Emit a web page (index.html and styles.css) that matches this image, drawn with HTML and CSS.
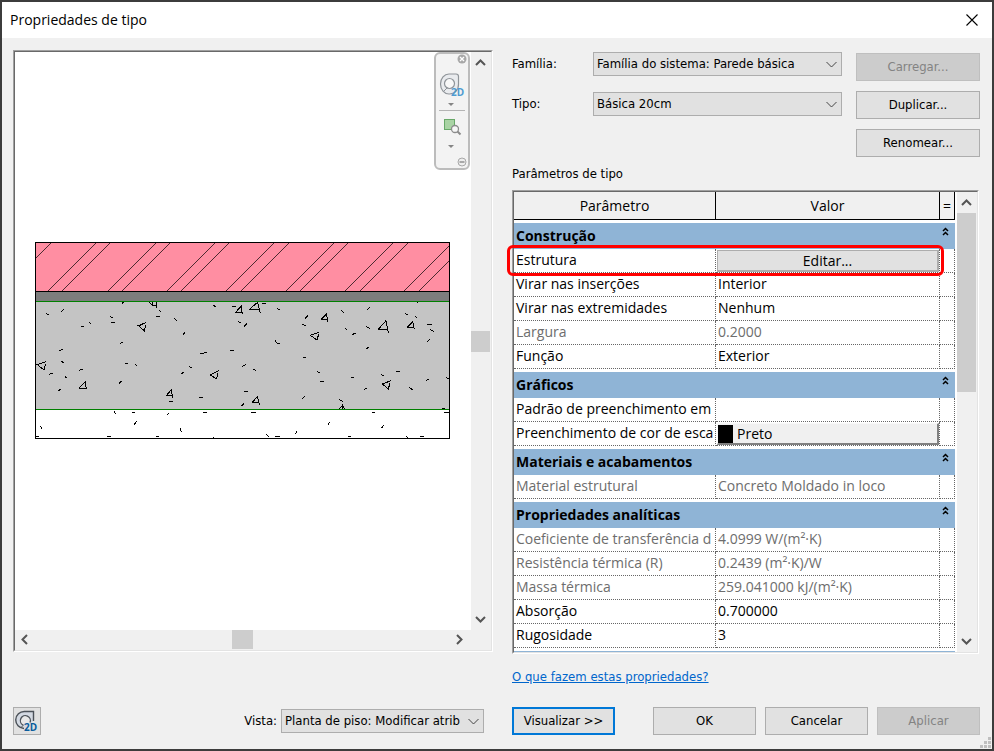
FILE: index.html
```html
<!DOCTYPE html>
<html lang="pt-BR">
<head>
    <meta charset="UTF-8">
    <meta name="viewport" content="width=device-width, initial-scale=1.0">
    <title>Propriedades de tipo</title>
    <link rel="stylesheet" href="styles.css">
</head>
<body>
    <div class="window">
        <header class="titlebar">
            <h1>Propriedades de tipo</h1>
            <button class="close" aria-label="Fechar">
                <svg width="12" height="12" viewBox="0 0 12 12"><path d="M.5.5l11 11M11.5.5l-11 11" stroke="#000" stroke-width="1.1"/></svg>
            </button>
        </header>

        <main class="content">
            <!-- preview -->
            <section class="left">
                <div class="sunken preview">
                    <div class="sunken-in preview-grid">
                        <div class="canvas">
                            <svg class="wall" width="416" height="198" viewBox="15 21 1248 594" shape-rendering="crispEdges" fill="none" stroke="#000" stroke-width="3">
                                <rect x="16" y="22" width="1242" height="147" fill="#ff8ea2" stroke="none"/>
                                <rect x="16" y="170" width="1242" height="29" fill="#7d7d7d" stroke="none"/>
                                <rect x="16" y="200" width="1242" height="323" fill="#c4c4c4" stroke="none"/>
                                <path stroke-width="2.100" d="M18 68L63 23M54 167L198 23M97 167L241 23M234 167L378 23M277 167L421 23M411 167L555 23M454 167L598 23M588 167L732 23M633 167L777 23M768 167L912 23M810 167L954 23M946 167L1090 23M990 167L1134 23M1123 167L1257 33M1168 167L1257 78"/>
                                <path d="M16 169.500H1260"/>
                                <path d="M16 199.500H1260M16 523.500H1260" stroke="#008000"/>
                                <!-- concrete stones -->
                                <path d="M348 263L325 272L344 288L346 270M325 272h8M47 380L22 389L42 405L46 388M148 459L166 440L169 463M148 459H169M409 482L424 464L428 488M409 482H428M566 407L541 420L560 432L563 414M357 202L370 212H379V218M366 201V211H378V201M616 233L634 213L637 238M616 233H637"/>
                                <path d="M658 223L683 202L691 235M658 223H691M874 252L889 237L894 262M874 252H894M868 292L841 301L861 315L866 298M1045 283L1068 257L1075 294M1045 283H1075M1132 277L1148 260L1153 282M1132 277H1153M1083 437L1057 447L1075 462L1080 444M667 502L682 485L688 509M667 502H688M927 522L938 510L944 522M928 493L938 500M938 508V522"/>
                                <path d="M48 235l8 4M94 230l8-7M240 244l8 4M244 262h11M153 274h9M178 262l5 4M276 205l5-4M378 244h11M387 225l5 5M432 250l8 7M459 299l6-6M270 325l9-4M88 348l10-5M94 379l7 4M57 418l11-4M105 424l5 5M148 406l10-3M85 469l7-7M267 445l8-7M285 386h10M316 388l5 4M454 418l7-7M477 395l8 4M417 499h11M507 487h11M511 357l19-5M550 211l7 4M607 214h11M625 260l8 3M642 274l8-8M600 346h11M637 394l10-5M642 469h11M634 514l8-8"/>
                                <path d="M697 204h10M740 220l9 4M825 250l8-8M817 268l10 4M735 317l7 8h7M818 370l9-4M934 227l7 6M946 280l5 4M967 298l11-3M1009 274l10 7M1009 343l6-6M1012 224l7-7M1125 236l9 3M1156 244l5 4M1192 268h13M1201 283l10 7M1192 319l9-7M861 409l8 4M870 439h12M963 427h9M1053 418l9 5M1098 409h12M1002 463l8-3M1137 457l11 7M1188 437l8-4M1248 428l9 3M817 491l8-7M670 403l7 3M1160 202h5M1236 520h10"/>
                                <!-- mortar dots -->
                                <path d="M253 528l3 8M306 532h10M313 569l6-10M412 541l4-6M451 580l3 10M519 532h12M31 573l4 8M18 604h8M231 604h12M378 604h9M549 605v5M664 532h13M895 571l3-9M1054 580l7-9M796 598l4-9M708 597l8 8M735 604h15M954 604h10M1026 532h9M1129 604l5 5M1170 604h12M1242 532h15"/>
                                <path d="M16.500 22.500H1258.500V610.500H16.500z"/>
                            </svg>

                            <div class="navbar">
                                <button class="nav-mini" aria-label="Fechar barra">
                                    <svg width="10" height="10" viewBox="0 0 10 10"><circle cx="5" cy="5" r="4.500" fill="#a8a8a8"/><path d="M3 3l4 4M7 3L3 7" stroke="#fff" stroke-width="1.300"/></svg>
                                </button>
                                <button class="nav-tool" aria-label="Roda de navegação 2D">
                                    <svg width="32" height="46" viewBox="0 0 32 46" fill="none">
                                        <path d="M13 10H20Q22.500 10 22.500 12.500V20A9 9.500 0 0 1 13 30A8.500 10 0 0 1 13 10z" fill="#e9ebee" stroke="#8f9499" stroke-width="1.200"/>
                                        <circle cx="13.500" cy="19.500" r="5" fill="#f8f8f8" stroke="#8f9499" stroke-width="1.200"/>
                                        <path d="M8 27l3.500-3.500" stroke="#8f9499"/>
                                        <text x="15" y="32" class="two-d">2D</text>
                                        <path d="M12 39h6l-3 3z" fill="#858585"/>
                                    </svg>
                                </button>
                                <hr>
                                <button class="nav-tool" aria-label="Zoom de região">
                                    <svg width="32" height="46" viewBox="0 0 32 46" fill="none">
                                        <rect x="8.500" y="8.500" width="10" height="10" fill="#a9d3a4" stroke="#68a868"/>
                                        <circle cx="19" cy="18" r="3.500" fill="#f7f7f7" stroke="#8c8c8c" stroke-width="1.300"/>
                                        <path d="M21.500 20.500l3 3" stroke="#8c8c8c" stroke-width="2"/>
                                        <path d="M12 34h6l-3 3z" fill="#858585"/>
                                    </svg>
                                </button>
                                <button class="nav-mini" aria-label="Opções">
                                    <svg width="10" height="10" viewBox="0 0 10 10"><circle cx="5" cy="5" r="4" fill="#eee" stroke="#a8a8a8"/><path d="M2.500 5h5" stroke="#a8a8a8" stroke-width="2"/></svg>
                                </button>
                            </div>
                        </div>
                        <div class="vscroll">
                            <button aria-label="Acima"><svg width="11" height="7" viewBox="0 0 11 7"><path d="M1 6l4.500-4.500L10 6"/></svg></button>
                            <div class="thumb"></div>
                            <button aria-label="Abaixo"><svg width="11" height="7" viewBox="0 0 11 7"><path d="M1 1l4.500 4.500L10 1"/></svg></button>
                        </div>
                        <div class="hscroll">
                            <button aria-label="Esquerda"><svg width="7" height="11" viewBox="0 0 7 11"><path d="M6 1L1.500 5.500L6 10"/></svg></button>
                            <div class="thumb"></div>
                            <button aria-label="Direita"><svg width="7" height="11" viewBox="0 0 7 11"><path d="M1 1l4.500 4.500L1 10"/></svg></button>
                        </div>
                    </div>
                </div>

                <div class="view-row">
                    <button class="wheel" aria-label="Roda 2D">
                        <svg width="24" height="24" viewBox="0 0 24 24" fill="none">
                            <path d="M9 19.500A8 8 0 0 1 9.500 2.500H18.500V12" fill="#d3d9e2" stroke="#4b5158" stroke-width="1.400"/>
                            <path d="M8 16A5 5 0 1 1 15 13.500" fill="#e8e8e8" stroke="#4b5158" stroke-width="1.300"/>
                            <path d="M5.500 19L9 15.500" stroke="#4b5158"/>
                            <text x="9" y="22" class="two-d dark">2D</text>
                        </svg>
                    </button>
                    <label for="view">Vista:</label>
                    <span class="select view-select">
                        <select id="view"><option>Planta de piso: Modificar atributos de tipo</option></select>
                        <svg width="11" height="7" viewBox="0 0 11 7"><path d="M.5 1l5 5l5-5"/></svg>
                    </span>
                </div>
            </section>

            <!-- type properties -->
            <section class="right">
                <div class="top">
                    <div class="fields">
                        <label for="family">Família:</label>
                        <span class="select">
                            <select id="family"><option>Família do sistema: Parede básica</option></select>
                            <svg width="11" height="7" viewBox="0 0 11 7"><path d="M.5 1l5 5l5-5"/></svg>
                        </span>
                        <label for="type">Tipo:</label>
                        <span class="select">
                            <select id="type"><option>Básica 20cm</option></select>
                            <svg width="11" height="7" viewBox="0 0 11 7"><path d="M.5 1l5 5l5-5"/></svg>
                        </span>
                    </div>
                    <div class="actions">
                        <button class="btn" disabled>Carregar...</button>
                        <button class="btn">Duplicar...</button>
                        <button class="btn">Renomear...</button>
                    </div>
                </div>

                <h2>Parâmetros de tipo</h2>

                <div class="sunken params">
                    <div class="sunken-in params-in">
                        <div class="table-area">
                            <table>
                                <colgroup><col class="c-name"><col><col class="c-eq"></colgroup>
                                <thead>
                                    <tr><th>Parâmetro</th><th>Valor</th><th>=</th></tr>
                                </thead>
                                <tbody>
                                    <tr class="group"><th colspan="2">Construção</th><td><button class="fold" aria-label="Recolher"><svg width="7" height="9" viewBox="0 0 7 9"><path d="M1 4l2.500-2.500L6 4M1 8l2.500-2.500L6 8"/></svg></button></td></tr>
                                    <tr><td>Estrutura</td><td class="cell-btn"><button class="edit">Editar...</button></td><td></td></tr>
                                    <tr><td>Virar nas inserções</td><td>Interior</td><td></td></tr>
                                    <tr><td>Virar nas extremidades</td><td>Nenhum</td><td></td></tr>
                                    <tr class="off"><td>Largura</td><td>0.2000</td><td></td></tr>
                                    <tr><td>Função</td><td>Exterior</td><td></td></tr>
                                </tbody>
                                <tbody>
                                    <tr class="group"><th colspan="2">Gráficos</th><td><button class="fold" aria-label="Recolher"><svg width="7" height="9" viewBox="0 0 7 9"><path d="M1 4l2.500-2.500L6 4M1 8l2.500-2.500L6 8"/></svg></button></td></tr>
                                    <tr><td>Padrão de preenchimento em</td><td></td><td></td></tr>
                                    <tr><td>Preenchimento de cor de esca</td><td class="cell-btn"><button class="color"><span class="swatch"></span>Preto</button></td><td></td></tr>
                                </tbody>
                                <tbody>
                                    <tr class="group"><th colspan="2">Materiais e acabamentos</th><td><button class="fold" aria-label="Recolher"><svg width="7" height="9" viewBox="0 0 7 9"><path d="M1 4l2.500-2.500L6 4M1 8l2.500-2.500L6 8"/></svg></button></td></tr>
                                    <tr class="off"><td>Material estrutural</td><td>Concreto Moldado in loco</td><td></td></tr>
                                </tbody>
                                <tbody>
                                    <tr class="group"><th colspan="2">Propriedades analíticas</th><td><button class="fold" aria-label="Recolher"><svg width="7" height="9" viewBox="0 0 7 9"><path d="M1 4l2.500-2.500L6 4M1 8l2.500-2.500L6 8"/></svg></button></td></tr>
                                    <tr class="off"><td>Coeficiente de transferência d</td><td>4.0999 W/(m²·K)</td><td></td></tr>
                                    <tr class="off"><td>Resistência térmica (R)</td><td>0.2439 (m²·K)/W</td><td></td></tr>
                                    <tr class="off"><td>Massa térmica</td><td>259.041000 kJ/(m²·K)</td><td></td></tr>
                                    <tr><td>Absorção</td><td>0.700000</td><td></td></tr>
                                    <tr><td>Rugosidade</td><td>3</td><td></td></tr>
                                </tbody>
                                <tbody>
                                    <tr class="group"><th colspan="2"></th><td></td></tr>
                                </tbody>
                            </table>
                        </div>
                        <div class="vscroll table-scroll">
                            <button aria-label="Acima"><svg width="11" height="7" viewBox="0 0 11 7"><path d="M1 6l4.500-4.500L10 6"/></svg></button>
                            <div class="thumb"></div>
                            <button aria-label="Abaixo"><svg width="11" height="7" viewBox="0 0 11 7"><path d="M1 1l4.500 4.500L10 1"/></svg></button>
                        </div>
                    </div>
                    <div class="highlight"></div>
                </div>

                <a class="help" href="#">O que fazem estas propriedades?</a>

                <div class="footer">
                    <button class="btn primary">Visualizar &gt;&gt;</button>
                    <button class="btn">OK</button>
                    <button class="btn">Cancelar</button>
                    <button class="btn" disabled>Aplicar</button>
                </div>
            </section>
        </main>

        <svg class="grip" width="12" height="12" viewBox="0 0 12 12" fill="#bfbfbf"><path d="M8 0h3v3H8zM4 4h3v3H4zM8 4h3v3H8zM0 8h3v3H0zM4 8h3v3H4zM8 8h3v3H8z"/></svg>
    </div>
</body>
</html>
```
FILE: styles.css
```css
* {
    box-sizing: border-box;
}

body {
    margin: 0;
    font-family: "DejaVu Sans Condensed", "DejaVu Sans", sans-serif;
    font-size: 13px;
    line-height: 18px;
    color: #000;
}

button, select {
    font: inherit;
    color: inherit;
    margin: 0;
    padding: 0;
    border: none;
    border-radius: 0;
    background: none;
}

svg {
    display: block;
}

.window {
    position: relative;
    display: flex;
    flex-direction: column;
    height: 100vh;
    border: 2px solid #3c3c3c;
    background-color: #f0f0f0;
}

.titlebar {
    display: flex;
    align-items: center;
    justify-content: space-between;
    height: 36px;
    padding: 0 14px 0 8px;
    background-color: #fff;
}

h1 {
    margin: 0;
    font-family: "Open Sans", sans-serif;
    font-size: 14px;
    font-weight: normal;
}

.content {
    flex: 1;
    display: grid;
    grid-template-columns: 480fr 468fr;
    gap: 19px;
    min-height: 0;
    padding: 12px 12px 14px 11px;
}

.left, .right {
    display: flex;
    flex-direction: column;
    min-width: 0;
    min-height: 0;
}

/* sunken frames */
.sunken {
    display: flex;
    flex: 1;
    min-height: 0;
    border: 1px solid;
    border-color: #a0a0a0 #fff #fff #a0a0a0;
}

.sunken-in {
    flex: 1;
    min-width: 0;
    border: 1px solid;
    border-color: #696969 #e3e3e3 #e3e3e3 #696969;
}

.preview {
    margin-bottom: 55px;
}

.preview-grid {
    display: grid;
    grid-template-columns: 1fr 20px;
    grid-template-rows: 1fr 20px;
}

.canvas {
    position: relative;
    display: flex;
    align-items: center;
    justify-content: center;
    background-color: #fff;
}

/* scrollbars */
.vscroll, .hscroll {
    display: flex;
    align-items: center;
    justify-content: space-between;
}

.vscroll {
    flex-direction: column;
    padding-right: 1px;
}

.hscroll {
    padding: 0 2px 1px 0;
}

.vscroll button, .hscroll button {
    display: flex;
    align-items: center;
    justify-content: center;
    width: 19px;
    height: 21px;
}

.vscroll path, .hscroll path {
    fill: none;
    stroke: #555;
    stroke-width: 2;
}

.thumb {
    width: 19px;
    height: 21px;
    background-color: #cdcdcd;
}

.hscroll .thumb {
    width: 21px;
    height: 19px;
}

/* floating navigation bar */
.navbar {
    position: absolute;
    top: 0;
    right: 1px;
    display: flex;
    flex-direction: column;
    width: 36px;
    height: 118px;
    border: 2px solid #bcbcbc;
    border-radius: 6px;
    background-color: #f3f3f3;
}

.navbar hr {
    width: 26px;
    height: 1px;
    margin: 0 auto;
    border: none;
    background-color: #b4b4b4;
}

.nav-mini {
    align-self: flex-end;
    padding-right: 1px;
}

.two-d {
    font-family: "Open Sans", sans-serif;
    font-size: 10px;
    font-weight: bold;
    fill: #4f9bd0;
}

.two-d.dark {
    fill: #0a5c9c;
}

.view-row {
    display: flex;
    align-items: center;
    padding-right: 9px;
}

.wheel {
    display: flex;
    align-items: center;
    justify-content: center;
    width: 28px;
    height: 28px;
    margin-right: auto;
    border: 1px solid #adadad;
    background-color: #e1e1e1;
}

.view-row label {
    margin-right: 4px;
}

.select {
    position: relative;
    display: block;
    height: 24px;
}

.view-select {
    width: 203px;
}

.select select {
    appearance: none;
    width: 100%;
    height: 24px;
    padding: 0 23px 0 3px;
    border: 1px solid #adadad;
    background-color: #e1e1e1;
}

.select svg {
    position: absolute;
    top: 9px;
    right: 5px;
    pointer-events: none;
}

.select path {
    fill: none;
    stroke: #444;
}

.top {
    display: flex;
    gap: 14px;
}

.fields {
    flex: 1;
    display: grid;
    grid-template-columns: 81px 1fr;
    gap: 16px 0;
    align-content: start;
    align-items: center;
    padding-top: 2px;
}

.actions {
    display: flex;
    flex-direction: column;
    gap: 10px;
    width: 124px;
    padding-top: 3px;
}

.btn {
    height: 28px;
    border: 1px solid #adadad;
    background-color: #e1e1e1;
}

.btn:disabled {
    color: #838383;
    border-color: #bfbfbf;
    background-color: #ccc;
}

.btn.primary {
    border: 2px solid #0078d7;
}

h2 {
    margin: 8px 0 7px;
    font-size: 13px;
    font-weight: normal;
}

.params {
    position: relative;
    margin-right: 1px;
}

.params-in {
    display: flex;
    gap: 2px;
    background-color: #fff;
}

.table-area {
    flex: 1;
    overflow: hidden;
}

.table-scroll {
    justify-content: flex-start;
    width: 20px;
    background-color: #f0f0f0;
}

.table-scroll .thumb {
    height: 179px;
    margin-bottom: auto;
}

/* parameter table */
table {
    width: 100%;
    table-layout: fixed;
    border-collapse: separate;
    border-spacing: 0;
    font-family: "Open Sans", sans-serif;
    font-size: 14px;
    line-height: 20px;
}

.c-name {
    width: 202px;
}

.c-eq {
    width: 15px;
}

th, td {
    height: 24px;
    padding: 0 0 1px 2px;
    overflow: hidden;
    white-space: nowrap;
    text-align: left;
}

td {
    border-right: 1px dotted #666;
    border-bottom: 1px dotted #666;
}

thead th {
    height: 28px;
    padding: 0;
    border-right: 1px solid #000;
    border-bottom: 1px solid #000;
    background-color: #f0f0f0;
    font-weight: normal;
    text-align: center;
}

.group th, .group td {
    height: 29px;
    border: none;
    border-top: 3px solid #fff;
    background-color: #8fb4d6;
}

.group td {
    padding: 4px 0 0 2px;
    vertical-align: top;
}

.off {
    color: #6d6d6d;
}

.fold {
    display: block;
}

.fold path {
    fill: none;
    stroke: #000;
    stroke-width: 1.5px;
}

.cell-btn {
    padding: 1px 0 0 1px;
}

.edit, .color {
    display: block;
    width: 100%;
    height: 22px;
    border: 1px solid #adadad;
    border-right-width: 2px;
    border-bottom-width: 2px;
    background-color: #e1e1e1;
    line-height: 18px;
}

.color {
    display: flex;
    align-items: center;
    gap: 4px;
    border-color: #f8f8f8 #808080 #808080 #f8f8f8;
    background-color: #f0f0f0;
}

.swatch {
    width: 15px;
    height: 18px;
    background-color: #000;
}

/* red frame over the first row */
.highlight {
    position: absolute;
    top: 54px;
    left: -6px;
    right: 34px;
    height: 31px;
    border: 3px solid #f00;
    border-radius: 6px;
    pointer-events: none;
}

.help {
    align-self: flex-start;
    margin-top: 14px;
    color: #0066cc;
}

.footer {
    display: flex;
    gap: 9px;
    margin-top: 21px;
}

.footer .btn {
    width: 103px;
}

.footer .primary {
    margin-right: auto;
}

.grip {
    position: absolute;
    right: 0;
    bottom: 0;
}
```
